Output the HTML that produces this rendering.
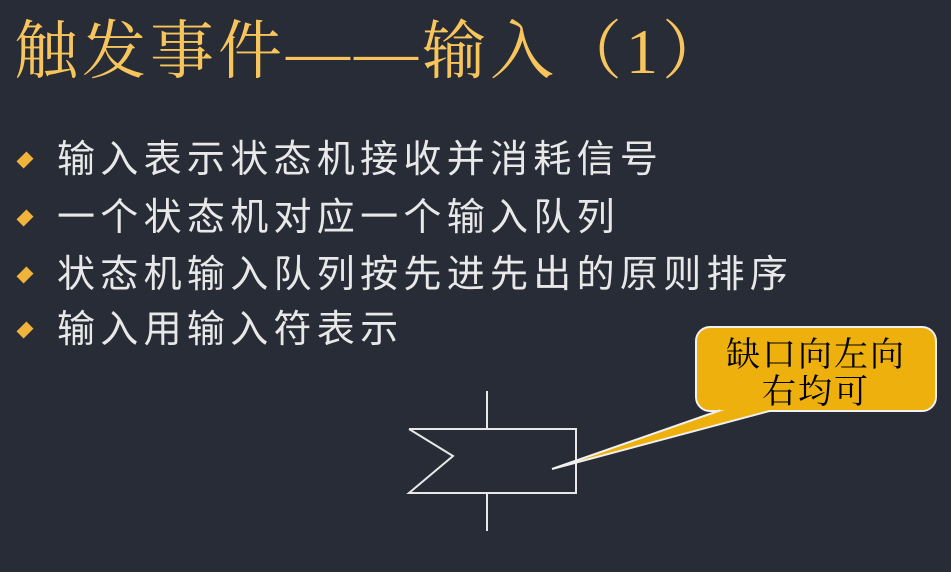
<!DOCTYPE html>
<html><head><meta charset="utf-8"><style>
body{margin:0;width:951px;height:572px;background:#282c36;overflow:hidden;position:relative}
.t{position:absolute;left:14px;top:12px;font:64px "Liberation Serif","Noto Serif CJK SC",serif;color:#f7c55c;white-space:nowrap;line-height:80px;letter-spacing:4px}
.b{position:absolute;left:57px;font:38px "Liberation Sans","Noto Sans CJK SC",sans-serif;color:#e8e8e8;white-space:nowrap;line-height:44px;letter-spacing:5.3px}
.d{position:absolute;left:20px;width:10px;height:10px;background:#f0b43a;transform:rotate(45deg) scaleY(1.4)}
.c{position:absolute;left:697px;top:337px;width:238px;height:75px;font:34px "Liberation Serif","Noto Serif CJK SC",serif;color:#000;text-align:center;line-height:37px;letter-spacing:2px}
</style></head><body>
<div class="t">触发事件——输入（1）</div>
<div class="d" style="top:155px"></div><div class="b" style="top:138px">输入表示状态机接收并消耗信号</div>
<div class="d" style="top:213px"></div><div class="b" style="top:196px">一个状态机对应一个输入队列</div>
<div class="d" style="top:270px"></div><div class="b" style="top:253px">状态机输入队列按先进先出的原则排序</div>
<div class="d" style="top:325px"></div><div class="b" style="top:308px">输入用输入符表示</div>
<svg width="951" height="572" style="position:absolute;left:0;top:0">
<g stroke="#e8e8e8" stroke-width="2" fill="none">
<line x1="487" y1="391" x2="487" y2="428"/><line x1="487" y1="493" x2="487" y2="531"/>
<polyline points="409,429 576,429 576,493 409,493 453,456 409,429"/>
</g>
<rect x="696" y="327" width="240" height="84" rx="14" fill="#eeb00d" stroke="#f0f0f0" stroke-width="2"/>
<polygon points="724,409 552,469 777,409" fill="#eeb00d" stroke="#f0f0f0" stroke-width="2"/>
<rect x="720" y="404" width="60" height="6" fill="#eeb00d"/>
</svg>
<div class="c">缺口向左向<br>右均可</div>
</body></html>
